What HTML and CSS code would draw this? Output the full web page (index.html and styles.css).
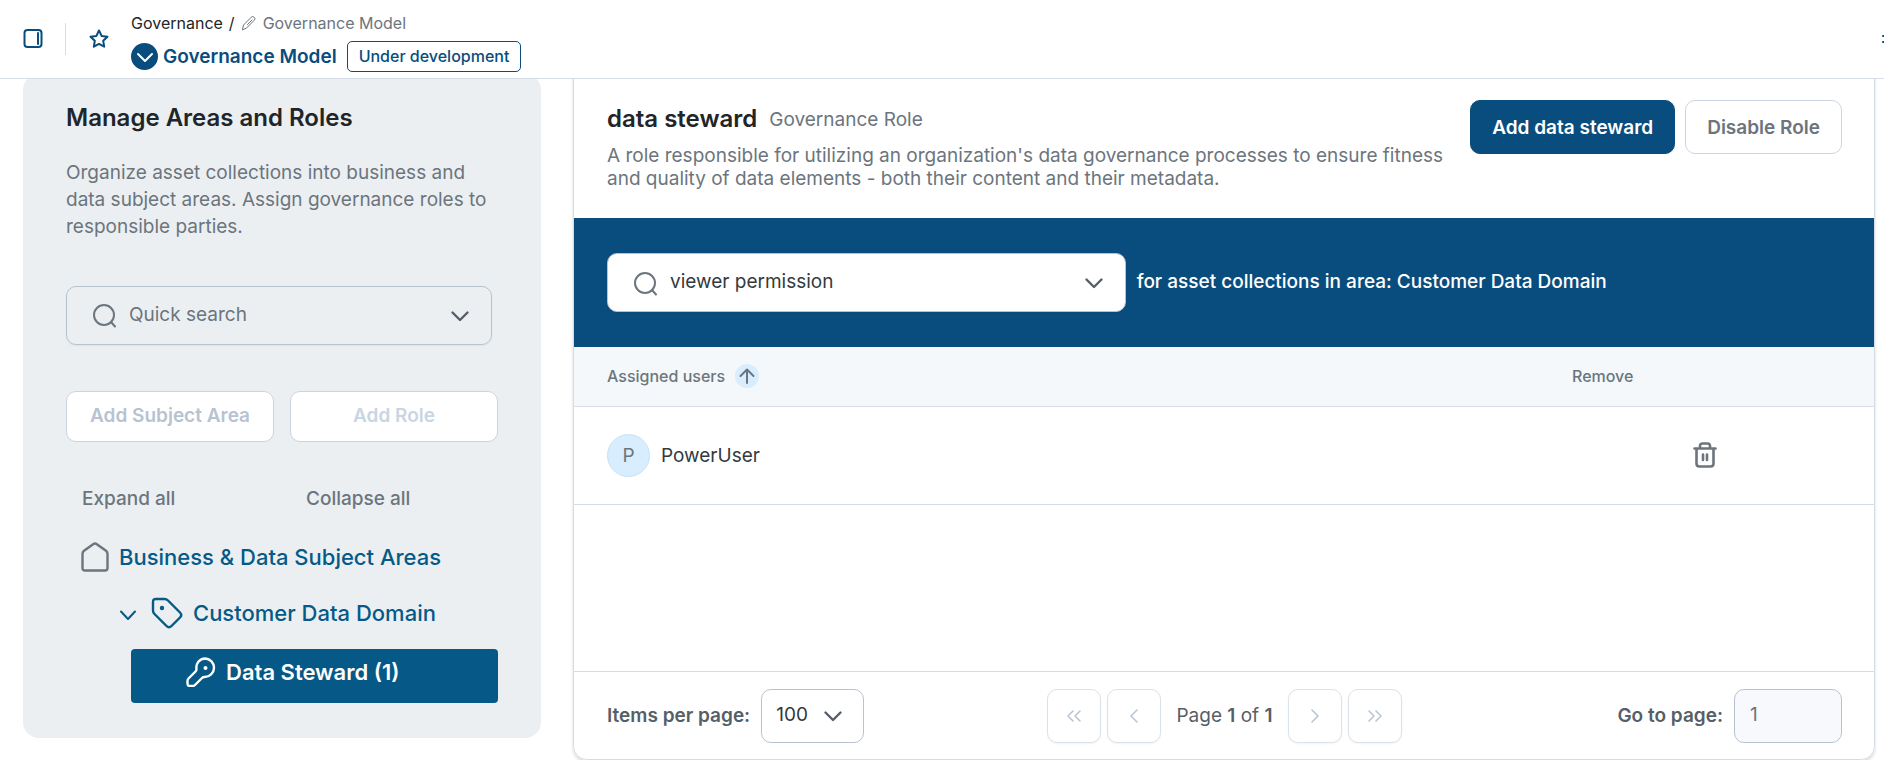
FILE: index.html
```html
<!DOCTYPE html>
<html lang="en">
<head>
  <meta charset="UTF-8" />
  <meta name="viewport" content="width=device-width, initial-scale=1.0" />
  <title>Governance Model</title>
  <link rel="stylesheet" href="styles.css">
</head>
<body>
  <header class="topbar">
    <button class="icon-btn" type="button" aria-label="Toggle panel">
      <svg width="20" height="20" viewBox="0 0 20 20"><rect x="1.500" y="1" width="17" height="17" rx="3"/><path d="M15 4v11"/></svg>
    </button>
    <span class="divider"></span>
    <button class="icon-btn" type="button" aria-label="Add to favorites">
      <svg width="20" height="20" viewBox="0 0 20 20"><path d="M10 1.500l2.600 5.400 5.900.8-4.300 4.100 1 5.900L10 14.900l-5.200 2.800 1-5.900L1.500 7.700l5.900-.8z"/></svg>
    </button>
    <div class="heading">
      <nav class="breadcrumb">
        <a href="#">Governance</a>
        <span>/</span>
        <svg width="16" height="16" viewBox="0 0 16 16"><path d="M1.500 14.500l1-4.500 7.700-7.700a2 2 0 0 1 3 0 2 2 0 0 1 0 3L5.700 12.900z"/><path d="M6.500 9.500L11 5"/></svg>
        <span class="current">Governance Model</span>
      </nav>
      <div class="title-row">
        <button class="round-btn" type="button" aria-label="Open menu">
          <svg width="18" height="18" viewBox="0 0 18 18"><path d="M2 6l7 7 7-7"/></svg>
        </button>
        <h1>Governance Model</h1>
        <span class="status">Under development</span>
      </div>
    </div>
    <button class="icon-btn more" type="button" aria-label="More">
      <svg width="16" height="20" viewBox="0 0 16 20"><path d="M1 7h14M1 13h14"/></svg>
    </button>
  </header>

  <main class="layout">
    <aside class="sidebar">
      <h2>Manage Areas and Roles</h2>
      <p class="intro">Organize asset collections into business and data subject areas. Assign governance roles to responsible parties.</p>
      <div class="combo">
        <svg class="search-icon" width="26" height="26" viewBox="0 0 26 26"><circle cx="13" cy="12" r="10"/><path d="M20 19l4 4.500"/></svg>
        <input type="text" placeholder="Quick search" aria-label="Quick search">
        <svg class="chevron" width="20" height="20" viewBox="0 0 20 20"><path d="M2.500 6.500L10 14l7.500-7.500"/></svg>
      </div>
      <div class="area-actions">
        <button class="btn" type="button" disabled>Add Subject Area</button>
        <button class="btn btn-faint" type="button" disabled>Add Role</button>
      </div>
      <div class="tree-actions">
        <button type="button">Expand all</button>
        <button type="button">Collapse all</button>
      </div>
      <ul class="tree">
        <li>
          <a class="root" href="#">
            <svg width="28" height="30" viewBox="0 0 28 30"><path d="M1.500 12q0-2 1.500-3.200L12.500 2Q14 1 15.500 2L25 8.800q1.500 1.200 1.500 3.200v14q0 2.500-2.500 2.500H4Q1.500 28.500 1.500 26z"/></svg>
            Business &amp; Data Subject Areas
          </a>
        </li>
        <li>
          <a class="domain" href="#">
            <svg class="caret" width="18" height="18" viewBox="0 0 18 18"><path d="M2 7.500L9 15l7-7.500"/></svg>
            <svg width="32" height="32" viewBox="0 0 32 32"><path d="M5 2h8.500q2 0 3.500 1.500l12 12q2.500 2.500 0 5l-8.500 8.500q-2.500 2.500-5 0L3.500 17Q2 15.500 2 13.500V5q0-3 3-3z"/><circle class="dot" cx="11" cy="11" r="2.200"/></svg>
            Customer Data Domain
          </a>
        </li>
        <li>
          <a class="role" href="#">
            <svg width="30" height="30" viewBox="0 0 30 30"><path d="M19 1.500a9 9 0 1 1-.5 18.500q-1.500 0-2.500 1l-7 7q-1 1-2.500 1H4q-2.500 0-2.500-2.500V24q0-1.500 1-2.500l7-7q1-1 1-2.500A9 9 0 0 1 19 1.500z"/><circle class="dot" cx="19.500" cy="11" r="2"/></svg>
            Data Steward (1)
          </a>
        </li>
      </ul>
    </aside>

    <section class="panel">
      <div class="panel-head">
        <div class="panel-text">
          <div class="panel-title">
            <h2>data steward</h2>
            <span>Governance Role</span>
          </div>
          <p>A role responsible for utilizing an organization's data governance processes to ensure fitness and quality of data elements - both their content and their metadata.</p>
        </div>
        <div class="panel-actions">
          <button class="btn btn-primary" type="button">Add data steward</button>
          <button class="btn" type="button">Disable Role</button>
        </div>
      </div>

      <div class="filter">
        <div class="combo combo-white">
          <svg class="search-icon" width="26" height="26" viewBox="0 0 26 26"><circle cx="13" cy="13" r="10"/><path d="M20 20l4 4.500"/></svg>
          <select id="permission">
            <option>viewer permission</option>
          </select>
          <svg class="chevron" width="20" height="20" viewBox="0 0 20 20"><path d="M2.500 6.500L10 14l7.500-7.500"/></svg>
        </div>
        <label for="permission">for asset collections in area: Customer Data Domain</label>
      </div>

      <table class="users">
        <thead>
          <tr>
            <th>
              <span class="sort">Assigned users
                <svg width="24" height="24" viewBox="0 0 24 24"><circle cx="12" cy="12" r="12"/><path d="M12 19V5.500M5.500 12L12 5.500l6.500 6.500"/></svg>
              </span>
            </th>
            <th class="remove">Remove</th>
          </tr>
        </thead>
        <tbody>
          <tr>
            <td>
              <span class="user"><span class="avatar">P</span>PowerUser</span>
            </td>
            <td class="remove">
              <button class="icon-btn" type="button" aria-label="Remove PowerUser">
                <svg class="trash" width="24" height="26" viewBox="0 0 24 26"><path d="M1.500 6.500h21M3.500 6.500v15q0 3 3 3h11q3 0 3-3v-15M7 6V4q0-2.500 2.500-2.500h5Q17 1.500 17 4v2M10 12.500v5.500M14 12.500v5.500"/></svg>
              </button>
            </td>
          </tr>
        </tbody>
      </table>

      <footer class="pager">
        <div class="pager-group">
          <label for="pageSize">Items per page:</label>
          <div class="page-size">
            <select id="pageSize">
              <option>100</option>
            </select>
            <svg class="chevron" width="20" height="20" viewBox="0 0 20 20"><path d="M2.500 6.500L10 14l7.500-7.500"/></svg>
          </div>
        </div>
        <div class="pager-nav">
          <button type="button" aria-label="First page" disabled><svg width="16" height="16" viewBox="0 0 16 16"><path d="M7 3L2 8l5 5M14 3L9 8l5 5"/></svg></button>
          <button type="button" aria-label="Previous page" disabled><svg width="16" height="16" viewBox="0 0 16 16"><path d="M11 2L5 8l6 6"/></svg></button>
          <span>Page <b>1</b> of <b>1</b></span>
          <button type="button" aria-label="Next page" disabled><svg width="16" height="16" viewBox="0 0 16 16"><path d="M5 2l6 6-6 6"/></svg></button>
          <button type="button" aria-label="Last page" disabled><svg width="16" height="16" viewBox="0 0 16 16"><path d="M2 3l5 5-5 5M9 3l5 5-5 5"/></svg></button>
        </div>
        <div class="pager-group pager-goto">
          <label for="goto">Go to page:</label>
          <input type="text" id="goto" placeholder="1">
        </div>
      </footer>
    </section>
  </main>
</body>
</html>
```
FILE: styles.css
```css
/* Global Styles */
* {
  box-sizing: border-box;
}

body {
  font-family: Inter, "Liberation Sans", sans-serif;
  font-size: 19px;
  margin: 0;
  background: #ffffff;
  color: #6c757d;
  overflow-x: hidden;
}

h1, h2, p, ul {
  margin: 0;
  padding: 0;
}

a {
  text-decoration: none;
}

button, input, select {
  font: inherit;
  color: inherit;
}

svg {
  fill: none;
  stroke: currentColor;
  stroke-width: 2;
  stroke-linecap: round;
  stroke-linejoin: round;
  flex-shrink: 0;
}

.dot {
  fill: currentColor;
  stroke: none;
}

.icon-btn {
  display: flex;
  padding: 0;
  border: none;
  background: none;
  color: #094d7e;
  cursor: pointer;
}

/* Top bar */
.topbar {
  position: sticky;
  top: 0;
  z-index: 10;
  display: flex;
  align-items: center;
  height: 79px;
  padding-left: 23px;
  background: #ffffff;
  border-bottom: 1px solid #d6dde6;
  overflow: hidden;
}

.divider {
  width: 1px;
  height: 32px;
  margin: 0 23px 0 22px;
  background: #d6dde6;
}

.heading {
  margin-left: 22px;
  padding-top: 5px;
}

.breadcrumb {
  display: flex;
  align-items: center;
  gap: 6px;
  font-size: 16px;
  line-height: 24px;
  color: #212529;
}

.breadcrumb a {
  color: inherit;
}

.breadcrumb svg {
  color: #6c757d;
  stroke-width: 1;
}

.current {
  color: #6c757d;
}

.title-row {
  display: flex;
  align-items: center;
  margin-top: 6px;
  color: #094d7e;
}

.title-row h1 {
  margin: 0 10px 0 5px;
  font-size: 19px;
  font-weight: 600;
}

.round-btn {
  display: flex;
  align-items: center;
  justify-content: center;
  width: 27px;
  height: 27px;
  padding: 0;
  border: none;
  border-radius: 50%;
  background: #094d7e;
  color: #ffffff;
}

.status {
  padding: 0 11px;
  border: 1px solid #094d7e;
  border-radius: 5px;
  font-size: 16px;
  font-weight: 500;
  line-height: 29px;
}

.more {
  margin: 0 -14px 0 auto;
}

/* Layout */
.layout {
  display: grid;
  grid-template-columns: 37fr 93fr;
  align-items: start;
  gap: 32px;
  padding: 0 9px 0 23px;
}

/* Sidebar */
.sidebar {
  margin-top: -5px;
  padding: 28px 43px 35px;
  border-radius: 16px;
  background: #ebeff2;
}

.sidebar h2 {
  font-size: 24px;
  font-weight: 600;
  line-height: 32px;
  color: #212529;
}

.intro {
  margin: 25px 0 46px;
  line-height: 27px;
}

.combo {
  display: flex;
  align-items: center;
  position: relative;
  height: 59px;
  margin-right: 6px;
  border: 1px solid #b7c3d0;
  border-radius: 10px;
  box-shadow: 0 1px 2px rgba(0, 0, 0, 0.05);
}

.combo input, .combo select {
  width: 100%;
  height: 100%;
  padding: 0 60px 2px 62px;
  border: none;
  background: none;
  appearance: none;
  outline: none;
}

input::placeholder {
  color: #6c757d;
  opacity: 1;
}

.search-icon {
  position: absolute;
  left: 24px;
  pointer-events: none;
}

.chevron {
  position: absolute;
  right: 21px;
  color: #565e67;
  stroke-width: 2.4;
  pointer-events: none;
}

.btn {
  padding: 0 21px;
  border: 1px solid #cad5e2;
  border-radius: 10px;
  background: #ffffff;
  font-weight: 600;
  white-space: nowrap;
}

.area-actions {
  display: grid;
  grid-template-columns: 1fr 1fr;
  gap: 16px;
  margin-top: 46px;
}

.area-actions .btn {
  height: 51px;
  padding: 0 0 2px;
  color: #b7c3d0;
}

.area-actions .btn-faint {
  color: #cad5e2;
}

.tree-actions {
  display: grid;
  grid-template-columns: 1fr 1fr;
  gap: 16px;
  margin-top: 45px;
}

.tree-actions button {
  padding: 0 16px;
  border: none;
  background: none;
  font-weight: 500;
  line-height: 24px;
  text-align: left;
}

.tree {
  list-style: none;
  margin-top: 18px;
}

.tree a {
  display: flex;
  align-items: center;
  gap: 10px;
  height: 56px;
  font-size: 22px;
  font-weight: 500;
  color: #055a87;
}

.tree svg {
  stroke-width: 2.4;
}

.tree .root {
  padding-left: 15px;
}

.root svg {
  color: #6c757d;
}

.tree .domain {
  padding-left: 53px;
}

.domain .caret {
  margin-right: 4px;
  stroke-width: 2;
}

.tree .role {
  height: 54px;
  margin: 8px 0 0 65px;
  padding: 0 0 8px 55px;
  border-radius: 4px;
  background: #065886;
  color: #ffffff;
  font-weight: 600;
}

/* Role panel */
.panel {
  margin-top: -16px;
  border: 1px solid #d6dde6;
  border-radius: 14px;
  box-shadow: 0 2px 3px rgba(30, 40, 70, 0.18);
  overflow: hidden;
}

.panel-head {
  display: flex;
  justify-content: space-between;
  gap: 24px;
  min-height: 154px;
  padding: 36px 32px 24px 33px;
}

.panel-title {
  display: flex;
  align-items: center;
  gap: 12px;
  margin-bottom: 6px;
}

.panel-title h2 {
  font-size: 24px;
  font-weight: 600;
  line-height: 38px;
  color: #212529;
}

.panel-text p {
  line-height: 23px;
}

.panel-actions {
  display: flex;
  gap: 10px;
}

.panel-actions .btn {
  height: 54px;
}

.panel-actions .btn-primary {
  border-color: #094d7e;
  background: #094d7e;
  color: #ffffff;
}

.filter {
  display: flex;
  align-items: center;
  gap: 11px;
  height: 129px;
  padding: 0 32px 0 33px;
  background: #094d7e;
  color: #ffffff;
  font-weight: 500;
}

.combo-white {
  flex: 0 0 42%;
  margin: 0;
  background: #ffffff;
  color: #6c757d;
  font-weight: 400;
}

.combo-white select {
  color: #343a40;
}

.filter label {
  padding-bottom: 2px;
}

/* Users table */
.users {
  width: 100%;
  border-collapse: collapse;
}

.users th {
  height: 59px;
  padding: 0 33px;
  border-bottom: 1px solid #d6dde6;
  background: #f4f8fb;
  font-size: 16px;
  font-weight: 500;
  text-align: left;
}

.users td {
  height: 98px;
  padding: 0 33px;
  border-bottom: 1px solid #d6dde6;
}

.users .remove {
  width: 26%;
  padding: 0 36px;
}

.users .icon-btn {
  margin: 0 auto;
  color: #6c757d;
}

.trash {
  stroke-width: 2.6;
}

.sort {
  display: flex;
  align-items: center;
  gap: 10px;
}

.sort circle {
  fill: #d8edfe;
  stroke: none;
}

.user {
  display: flex;
  align-items: center;
  gap: 11px;
  color: #343a40;
}

.avatar {
  display: flex;
  align-items: center;
  justify-content: center;
  width: 43px;
  height: 43px;
  border: 1px solid #c8e2f5;
  border-radius: 50%;
  background: #d8edfe;
  color: #6c757d;
}

/* Pager */
.pager {
  display: grid;
  grid-template-columns: 1fr auto 1fr;
  align-items: center;
  margin-top: 166px;
  padding: 17px 32px 16px 33px;
  border-top: 1px solid #d6dde6;
  color: #565e67;
}

.pager-group {
  display: flex;
  align-items: center;
  gap: 11px;
}

.pager-group label {
  font-weight: 600;
}

.pager-goto {
  justify-content: flex-end;
}

.page-size {
  display: flex;
  align-items: center;
  position: relative;
}

.page-size select, .pager-goto input {
  height: 54px;
  padding: 0 15px 2px;
  border: 1px solid #b7c3d0;
  border-radius: 10px;
  background: #ffffff;
  appearance: none;
}

.page-size select {
  width: 103px;
  padding-left: 14px;
  color: #343a40;
}

.pager-goto input {
  width: 108px;
  background: #f7f9fc;
}

.pager-nav {
  display: flex;
  align-items: center;
  gap: 6px;
}

.pager-nav span {
  margin: 0 9px;
}

.pager-nav b {
  font-weight: 600;
}

.pager-nav button {
  display: flex;
  align-items: center;
  justify-content: center;
  width: 54px;
  height: 54px;
  padding: 0;
  border: 1px solid #dbe2ea;
  border-radius: 10px;
  background: #ffffff;
  color: #b7c3d0;
  box-shadow: 0 1px 2px rgba(0, 0, 0, 0.05);
}

.pager-nav svg {
  stroke-width: 1.5;
}
```
